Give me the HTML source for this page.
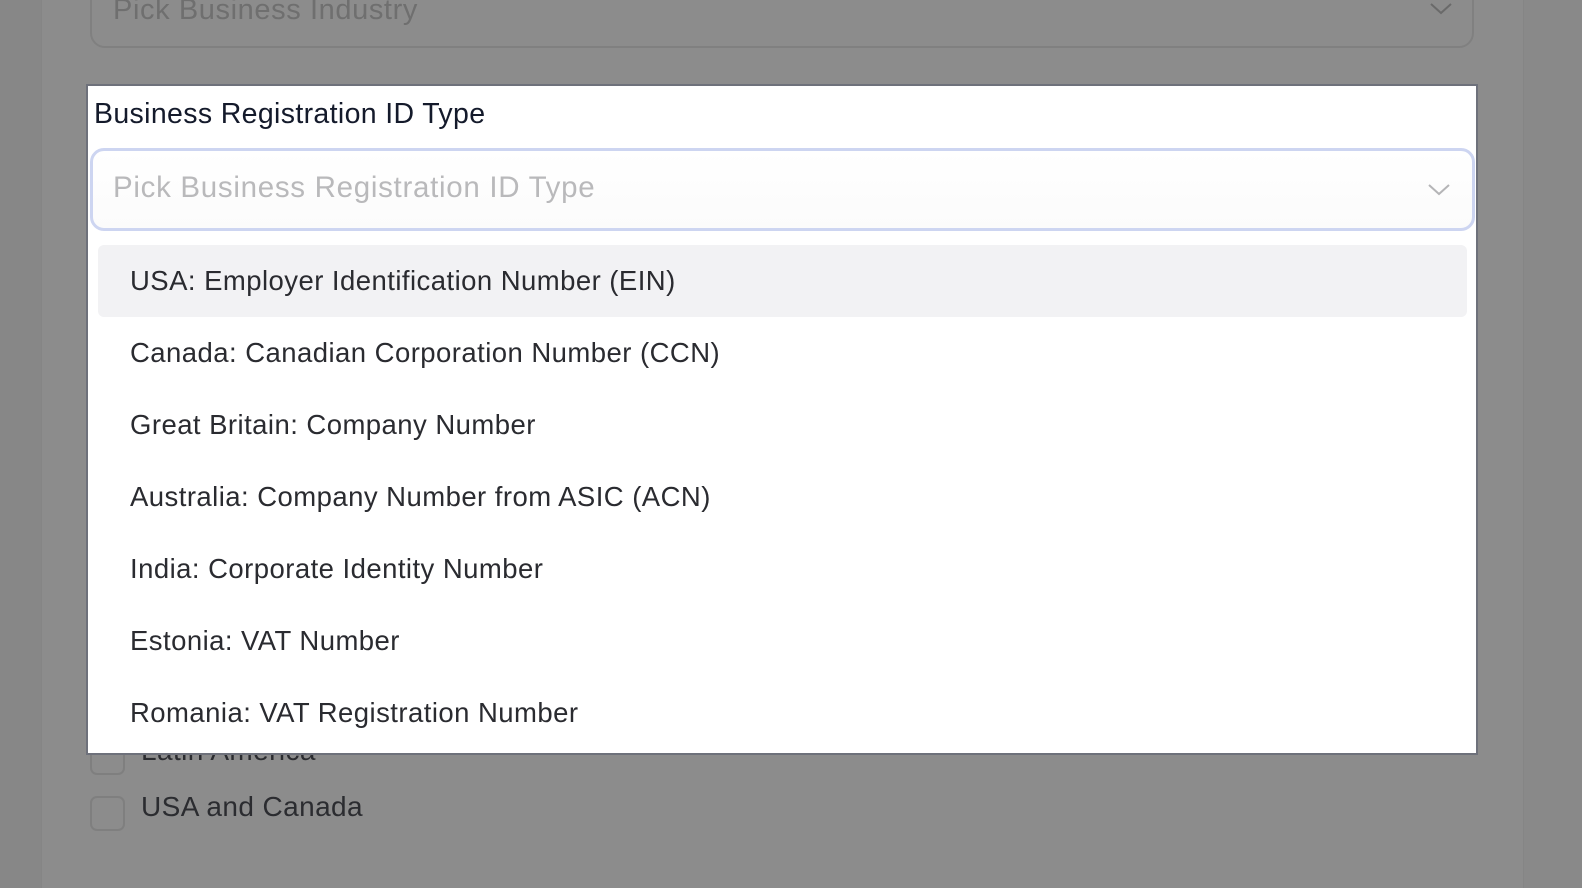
<!DOCTYPE html>
<html><head><meta charset="utf-8"><style>
*{box-sizing:border-box;margin:0;padding:0}
body{width:1582px;height:888px;overflow:hidden;background:#878787;font-family:"Liberation Sans",Arial,sans-serif;position:relative}
.card{position:absolute;left:41px;top:0;width:1483px;height:888px;background:#8c8c8c;border-left:1px solid #858585;border-right:1px solid #858585}
.right{position:absolute;left:1524px;top:0;width:58px;height:888px;background:#898989}
.sel{position:absolute;left:90px;top:-30px;width:1384px;height:78px;border:2px solid #808080;border-radius:15px}
.sel span{position:absolute;left:21px;top:22px;font-size:29px;letter-spacing:0.6px;color:#6f6f6f}
.chev{position:absolute}
.cb{position:absolute;left:90px;width:35px;height:35px;border:2px solid #7f7f7f;border-radius:7px}
.bt{position:absolute;left:141px;font-size:28px;letter-spacing:0.4px;color:#2b2c30}
.panel{position:absolute;left:86px;top:84px;width:1392px;height:671px;background:#fff;border:2px solid #6e717b;overflow:hidden}
.lbl{position:absolute;left:6px;top:12px;font-size:28.5px;letter-spacing:0.35px;color:#141a2b}
.inp{position:absolute;left:2px;top:62px;width:1385px;height:83px;border:3px solid #cdd5f1;border-radius:14px;background:linear-gradient(#fff,#fbfbfb)}
.inp span{position:absolute;left:20px;top:20px;font-size:29.5px;letter-spacing:0.7px;color:#b9b9bb}
.opt{position:absolute;left:10px;width:1369px;height:72px;border-radius:6px;font-size:27.5px;letter-spacing:0.45px;color:#2a2b30;padding-left:32px;line-height:72px}
.opt.h{background:#f2f2f4}
</style></head><body>
<div class="card"></div><div class="right"></div>
<div class="sel"><span>Pick Business Industry</span>
<svg class="chev" style="left:1337px;top:30px" width="24" height="14" viewBox="0 0 24 14"><path d="M2 2 L12 11 L22 2" fill="none" stroke="#6a6a6a" stroke-width="2"/></svg></div>
<div class="cb" style="top:740px"></div><div class="bt" style="top:735px">Latin America</div>
<div class="cb" style="top:796px"></div><div class="bt" style="top:791px">USA and Canada</div>
<div class="panel">
<div class="lbl">Business Registration ID Type</div>
<div class="inp"><span>Pick Business Registration ID Type</span>
<svg class="chev" style="left:1334px;top:32px" width="24" height="14" viewBox="0 0 24 14"><path d="M2 2 L12 11 L22 2" fill="none" stroke="#b5b5b7" stroke-width="2"/></svg></div>
<div class="opt h" style="top:159px">USA: Employer Identification Number (EIN)</div>
<div class="opt" style="top:231px">Canada: Canadian Corporation Number (CCN)</div>
<div class="opt" style="top:303px">Great Britain: Company Number</div>
<div class="opt" style="top:375px">Australia: Company Number from ASIC (ACN)</div>
<div class="opt" style="top:447px">India: Corporate Identity Number</div>
<div class="opt" style="top:519px">Estonia: VAT Number</div>
<div class="opt" style="top:591px">Romania: VAT Registration Number</div>
</div>
</body></html>
